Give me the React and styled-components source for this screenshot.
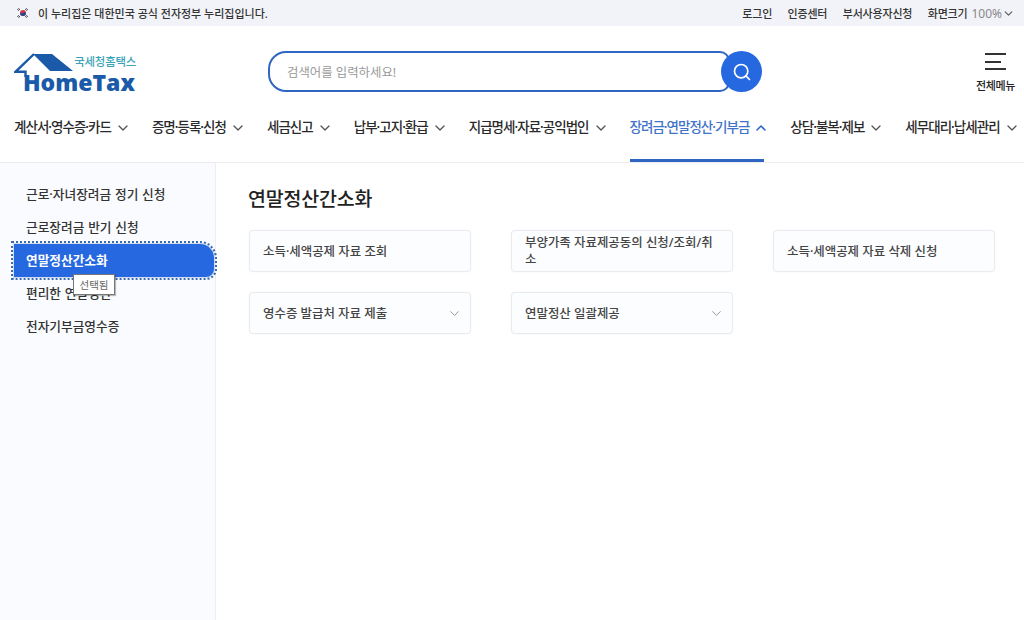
import React from 'react';
import styled, { createGlobalStyle } from 'styled-components';
import { Search, ChevronDown, ChevronUp } from 'lucide-react';

const GlobalStyle = createGlobalStyle`
  html, body {
    margin: 0;
    padding: 0;
    background: #fff;
    overflow: hidden;
  }
  body {
    font-family: "Noto Sans", "Noto Sans CJK KR", sans-serif;
    color: #222;
  }
  * { box-sizing: border-box; }
`;

const navItems = [
  { label: '계산서·영수증·카드' },
  { label: '증명·등록·신청' },
  { label: '세금신고' },
  { label: '납부·고지·환급' },
  { label: '지급명세·자료·공익법인' },
  { label: '장려금·연말정산·기부금', active: true },
  { label: '상담·불복·제보' },
  { label: '세무대리·납세관리' },
];

const sideItems = [
  { label: '근로·자녀장려금 정기 신청' },
  { label: '근로장려금 반기 신청' },
  { label: '연말정산간소화', active: true },
  { label: '편리한 연말정산' },
  { label: '전자기부금영수증' },
];

const cards = [
  { label: '소득·세액공제 자료 조회' },
  { label: '부양가족 자료제공동의 신청/조회/취소' },
  { label: '소득·세액공제 자료 삭제 신청' },
  { label: '영수증 발급처 자료 제출', more: true },
  { label: '연말정산 일괄제공', more: true },
];

const App = () => (
  <Page>
    <GlobalStyle />
    <TopBar>
      <Notice>
        <Flag viewBox="0 0 16 16">
          <circle cx="8" cy="8" r="3.4" fill="#d3354a" />
          <path d="M4.6 8a3.4 3.4 0 0 0 6.8 0c0-1-1.7-1.5-3.4 0S4.6 7 4.6 8z" fill="#27478f" />
          <path d="M1.5 4.5l2-2M2.5 5.5l2-2M11.5 2.5l2 2M10.5 3.5l2 2M1.5 11.5l2 2M2.5 10.5l2 2M11.5 13.5l2-2M10.5 12.5l2-2" stroke="#333" strokeWidth="1" />
        </Flag>
        이 누리집은 대한민국 공식 전자정부 누리집입니다.
      </Notice>
      <Utility>
        <UtilityLink>로그인</UtilityLink>
        <UtilityLink>인증센터</UtilityLink>
        <UtilityLink>부서사용자신청</UtilityLink>
        <ZoomControl>
          화면크기 <ZoomValue>100%</ZoomValue>
          <ChevronDown size={13} strokeWidth={2.5} color="#666" />
        </ZoomControl>
      </Utility>
    </TopBar>

    <Header>
      <Logo>
        <LogoRoof viewBox="0 0 124 46">
          <path d="M19 1 H38 L59 18 H36 Z" fill="#1a5aa8" />
          <path d="M20 1 L1.5 18.8 H11.5 V24" fill="none" stroke="#1a5aa8" strokeWidth="2.4" />
        </LogoRoof>
        <LogoSub>국세청홈택스</LogoSub>
        <LogoName>HomeTax</LogoName>
      </Logo>
      <SearchBox>
        <SearchField>검색어를 입력하세요!</SearchField>
        <SearchButton>
          <Search size={20} strokeWidth={2} color="#fff" />
        </SearchButton>
      </SearchBox>
      <AllMenu>
        <Burger>
          <span />
          <span />
          <span />
        </Burger>
        전체메뉴
      </AllMenu>
    </Header>

    <Nav>
      {navItems.map((item) => (
        <NavItem key={item.label} $active={item.active}>
          {item.label}
          {item.active ? (
            <ChevronUp size={16} strokeWidth={2.4} />
          ) : (
            <ChevronDown size={16} strokeWidth={2} />
          )}
        </NavItem>
      ))}
    </Nav>

    <Body>
      <Sidebar>
        {sideItems.map((item) => (
          <SideItem key={item.label} $active={item.active}>
            {item.label}
            {item.active && <Tooltip>선택됨</Tooltip>}
          </SideItem>
        ))}
      </Sidebar>
      <Content>
        <Title>연말정산간소화</Title>
        <CardGrid>
          {cards.map((card) => (
            <Card key={card.label}>
              <CardLabel>{card.label}</CardLabel>
              {card.more && <ChevronDown size={15} strokeWidth={1.4} color="#888" />}
            </Card>
          ))}
        </CardGrid>
      </Content>
    </Body>
  </Page>
);

export default App;

const Page = styled.div`
  width: 1024px;
  height: 620px;
  display: flex;
  flex-direction: column;
  overflow: hidden;
`;

const TopBar = styled.div`
  height: 26px;
  flex: none;
  background: #f1f3f8;
  display: flex;
  align-items: center;
  justify-content: space-between;
  padding: 0 9px 0 16px;
  font-size: 11px;
  color: #333;
`;

const Notice = styled.div`
  display: flex;
  align-items: center;
  gap: 8px;
  font-weight: 500;
  letter-spacing: 0;
`;

const Flag = styled.svg`
  width: 14px;
  height: 14px;
`;

const Utility = styled.div`
  display: flex;
  align-items: center;
  gap: 15.5px;
  font-weight: 500;
  letter-spacing: -0.2px;
`;

const UtilityLink = styled.span``;

const ZoomControl = styled.span`
  display: flex;
  align-items: center;
  gap: 4px;
  svg {
    margin-left: -4px;
  }
`;

const ZoomValue = styled.span`
  color: #888;
  font-size: 12px;
  font-weight: 400;
  letter-spacing: 0;
`;

const Header = styled.div`
  height: 78px;
  flex: none;
  display: flex;
  align-items: flex-start;
  padding: 25px 9px 0 14px;
`;

const Logo = styled.div`
  position: relative;
  width: 122px;
  height: 42px;
  margin-top: 2px;
  flex: none;
`;

const LogoRoof = styled.svg`
  position: absolute;
  left: 0;
  top: 0;
  width: 124px;
  height: 46px;
`;

const LogoSub = styled.div`
  position: absolute;
  right: 0;
  top: 2px;
  font-size: 11.4px;
  line-height: 14px;
  font-weight: 500;
  letter-spacing: -0.2px;
  color: #3aa3b8;
`;

const LogoName = styled.div`
  position: absolute;
  left: 9px;
  top: 17px;
  font-family: "Open Sans", sans-serif;
  font-size: 23px;
  line-height: 24px;
  font-weight: 800;
  letter-spacing: 0;
  color: #1a5aa8;
`;

const SearchBox = styled.div`
  display: flex;
  align-items: center;
  width: 494px;
  height: 41px;
  margin-left: 132px;
  flex: none;
`;

const SearchField = styled.div`
  width: 462px;
  height: 41px;
  margin-right: -9px;
  border: 2px solid #2f66c4;
  border-radius: 18px 10px 10px 18px;
  display: flex;
  align-items: center;
  padding-left: 17px;
  font-size: 12.4px;
  color: #999;
`;

const SearchButton = styled.div`
  width: 41px;
  height: 41px;
  flex: none;
  border-radius: 50%;
  background: #2668e0;
  display: flex;
  align-items: center;
  justify-content: center;
  z-index: 1;
`;

const AllMenu = styled.div`
  margin-left: auto;
  display: flex;
  flex-direction: column;
  align-items: center;
  font-size: 11px;
  font-weight: 500;
  letter-spacing: -0.4px;
  line-height: 14px;
  gap: 9px;
`;

const Burger = styled.div`
  width: 21px;
  height: 17px;
  display: flex;
  flex-direction: column;
  justify-content: space-between;
  align-items: flex-start;
  margin-top: 2px;
  span {
    display: block;
    height: 2px;
    width: 21px;
    background: #333;
  }
  span:nth-child(2) {
    width: 16px;
  }
`;

const Nav = styled.div`
  height: 59px;
  flex: none;
  display: flex;
  align-items: flex-start;
  gap: 26px;
  padding-left: 14px;
  border-bottom: 1px solid #ececf0;
  white-space: nowrap;
`;

const NavItem = styled.div`
  height: 58px;
  padding-top: 13px;
  display: flex;
  align-items: flex-start;
  gap: 4px;
  font-size: 13.5px;
  line-height: 20px;
  font-weight: 500;
  letter-spacing: -0.98px;
  color: ${(p) => (p.$active ? '#3f74c9' : '#2a2a2a')};
  border-bottom: 3px solid ${(p) => (p.$active ? '#2f66c4' : 'transparent')};
  svg {
    margin: 3px -5px 0 0;
    color: ${(p) => (p.$active ? '#2f66c4' : '#555')};
  }
`;

const Body = styled.div`
  flex: 1;
  display: flex;
  min-height: 0;
`;

const Sidebar = styled.div`
  width: 216px;
  flex: none;
  background: #f9fbfe;
  border-right: 1px solid #eceef2;
  padding: 15px 0 0 14px;
  display: flex;
  flex-direction: column;
`;

const SideItem = styled.div`
  position: relative;
  height: 33px;
  display: flex;
  align-items: center;
  padding: 0 0 2px 12px;
  font-size: 12.7px;
  word-spacing: 0.5px;
  font-weight: 500;
  color: ${(p) => (p.$active ? '#fff' : '#333')};
  ${(p) =>
    p.$active &&
    `
    background: #2668e0;
    border-radius: 0 14px 8px 0;
    outline: 2px dotted #3a6ab0;
    outline-offset: 1px;
    box-shadow: 0 0 0 1px #cfdcef;
    font-weight: 700;
    margin-right: 1px;
  `}
`;

const Tooltip = styled.div`
  position: absolute;
  left: 59px;
  top: 30px;
  width: 42px;
  height: 21px;
  background: #fff;
  border: 1px solid #777;
  box-shadow: 1px 1px 1px rgba(0, 0, 0, 0.25);
  display: flex;
  align-items: center;
  justify-content: center;
  font-size: 10.5px;
  font-weight: 400;
  color: #666;
  z-index: 2;
`;

const Content = styled.div`
  flex: 1;
  padding: 22px 29px 0 32px;
`;

const Title = styled.h2`
  margin: 0 0 17px;
  font-size: 19.5px;
  line-height: 28px;
  font-weight: 500;
  letter-spacing: -0.2px;
  color: #222;
`;

const CardGrid = styled.div`
  display: grid;
  grid-template-columns: repeat(3, 222px);
  column-gap: 40px;
  row-gap: 20px;
  margin-left: 1px;
`;

const Card = styled.div`
  height: 42px;
  background: #fcfdff;
  border: 1px solid #e8ebf0;
  border-radius: 4px;
  box-shadow: 0 0 2px rgba(0, 0, 0, 0.05);
  display: flex;
  align-items: center;
  justify-content: space-between;
  padding: 0 8px 0 13px;
  font-size: 12.45px;
  line-height: 17px;
  font-weight: 500;
  color: #444;
`;

const CardLabel = styled.span`
  min-width: 0;
  flex: 1;
  padding-right: 5px;
  word-break: break-all;
`;
